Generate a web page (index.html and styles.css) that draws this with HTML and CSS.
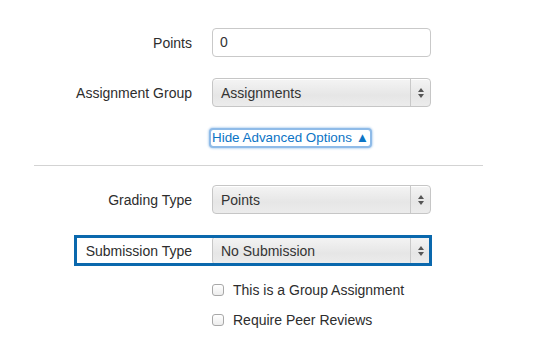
FILE: index.html
```html
<!DOCTYPE html>
<html>
<head>
<meta charset="utf-8">
<link rel="stylesheet" href="styles.css">
</head>
<body>
<div class="form">
  <div class="row">
    <label class="lbl">Points</label>
    <div class="ctl"><div class="input">0</div></div>
  </div>
  <div class="row">
    <label class="lbl">Assignment Group</label>
    <div class="ctl"><div class="select"><span class="val">Assignments</span><span class="arrows"><i class="up"></i><i class="down"></i></span></div></div>
  </div>
  <div class="row linkrow">
    <div class="lbl"></div>
    <div class="ctl"><a class="adv">Hide Advanced Options ▲</a></div>
  </div>
  <hr class="divider">
  <div class="row gradrow">
    <label class="lbl">Grading Type</label>
    <div class="ctl"><div class="select"><span class="val">Points</span><span class="arrows"><i class="up"></i><i class="down"></i></span></div></div>
  </div>
  <div class="row hlrow">
    <label class="lbl">Submission Type</label>
    <div class="ctl"><div class="select"><span class="val">No Submission</span><span class="arrows"><i class="up"></i><i class="down"></i></span></div></div>
    <div class="highlight"></div>
  </div>
  <div class="checks">
    <label class="check"><span class="box"></span>This is a Group Assignment</label>
    <label class="check"><span class="box"></span>Require Peer Reviews</label>
  </div>
</div>
</body>
</html>
```

FILE: styles.css
```css
html, body { margin: 0; padding: 0; background: #fff; }
body {
  font-family: "Liberation Sans", Arial, Helvetica, sans-serif;
  font-size: 14px;
  color: #2d2d2d;
  width: 550px;
  height: 360px;
  overflow: hidden;
}
.form { padding-top: 28px; }
.row {
  display: flex;
  align-items: center;
  height: 29px;
  margin-bottom: 21px;
  position: relative;
}
.lbl {
  width: 192px;
  text-align: right;
  flex: none;
}
.ctl { margin-left: 20px; width: 219px; flex: none; }
.input {
  box-sizing: border-box;
  height: 29px;
  border: 1px solid #c9c9c9;
  border-radius: 4px;
  background: #fff;
  padding-left: 7px;
  line-height: 27px;
  color: #333;
}
.select {
  box-sizing: border-box;
  height: 29px;
  border: 1px solid #c6c6c6;
  border-radius: 4px;
  background: linear-gradient(#f4f4f4, #e6e6e6 60%, #ececec);
  display: flex;
  align-items: stretch;
  box-shadow: inset 0 1px 0 #fff;
}
.val { flex: 1; padding-left: 8px; line-height: 28px; color: #333; }
.arrows {
  width: 19px;
  border-left: 1px solid #c9c9c9;
  display: flex;
  flex-direction: column;
  align-items: center;
  justify-content: center;
  gap: 2px;
}
.up, .down { display: block; width: 0; height: 0; border-left: 3px solid transparent; border-right: 3px solid transparent; }
.up { border-bottom: 4px solid #555; }
.down { border-top: 4px solid #555; }
.linkrow { height: 20px; margin-top: -1px; margin-bottom: 0; }
.adv {
  display: inline-block;
  color: #0b74c5;
  font-size: 13.4px;
  line-height: 16px;
  padding: 0 1px;
  margin-left: -1px;
  border-radius: 2px;
  box-shadow: 0 0 0 2px #8fbbe8, 0 0 2px 3px #c3dbf3;
}
.divider {
  border: 0;
  border-top: 1px solid #d3d3d3;
  margin: 18px 0 0 34px;
  width: 449px;
  height: 0;
  margin-bottom: 19px;
}
.gradrow { margin-bottom: 22px; }
.hlrow { margin-bottom: 16px; }
.highlight {
  position: absolute;
  left: 74px;
  top: -1px;
  width: 358px;
  height: 31px;
  box-sizing: border-box;
  border: 3px solid #0a68ad;
}
.checks { margin-left: 212px; display: flex; flex-direction: column; gap: 12px; }
.check { display: flex; align-items: center; height: 18px; }
.box {
  width: 10px;
  height: 10px;
  border: 1px solid #a8a8a8;
  border-radius: 3px;
  background: linear-gradient(#fff, #ededed);
  margin-right: 9px;
  box-sizing: content-box;
}
```
